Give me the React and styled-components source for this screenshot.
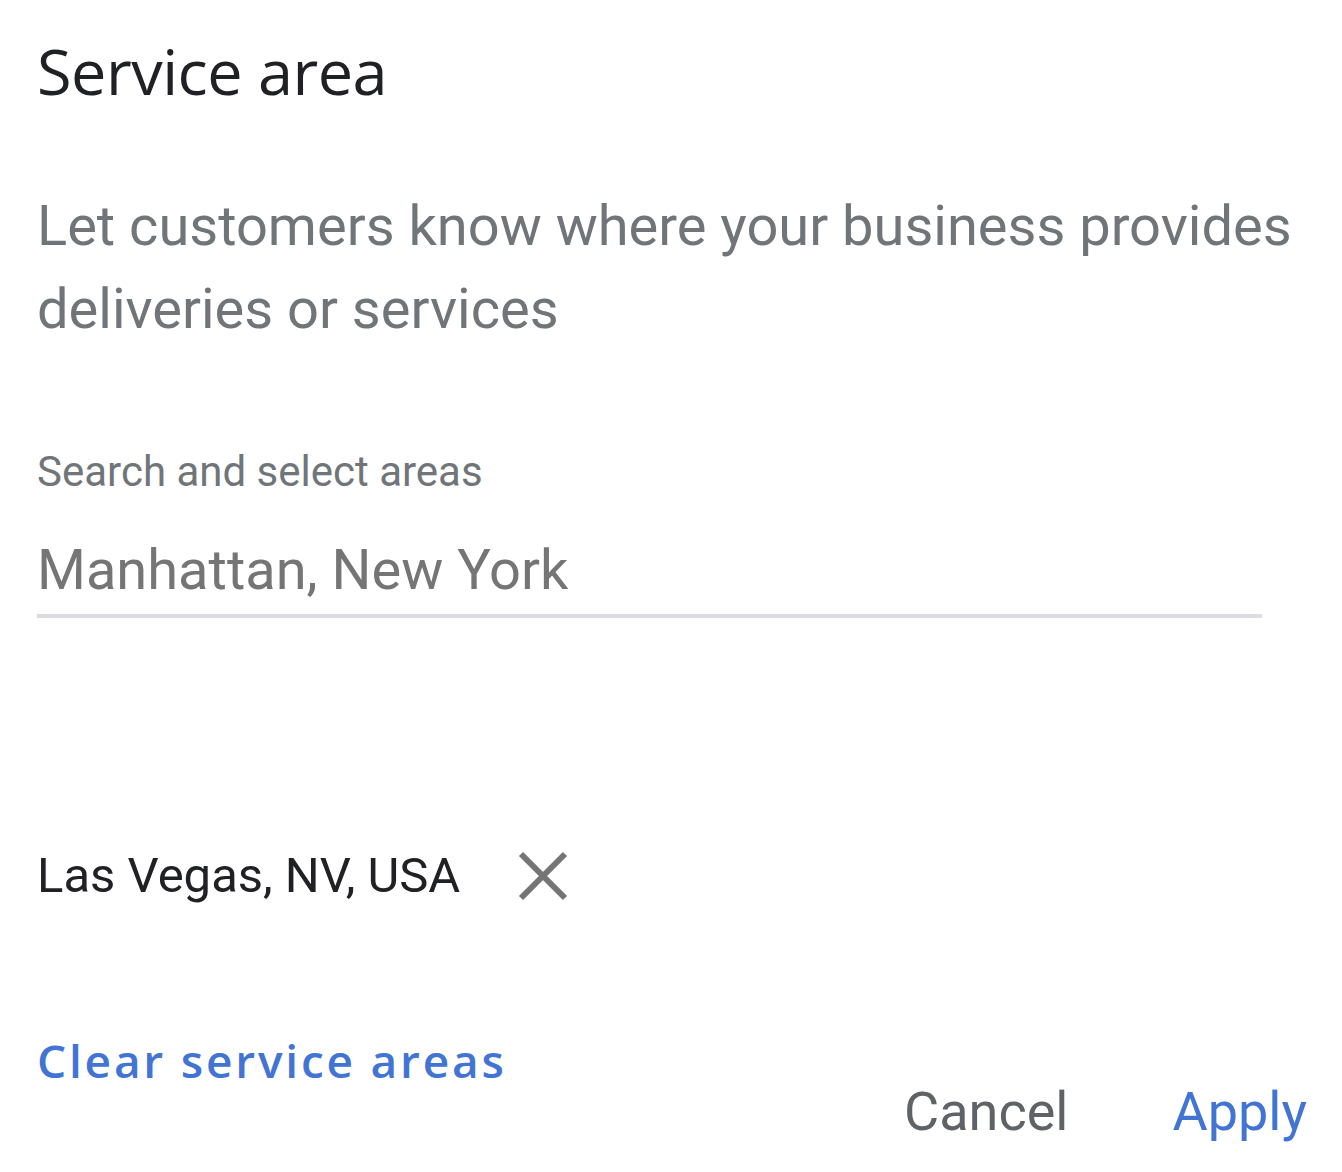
import React from "react";
import styled, { createGlobalStyle } from "styled-components";

const GlobalStyle = createGlobalStyle`
  html, body {
    margin: 0;
    padding: 0;
    background: #ffffff;
  }
`;

const App = () => {
  return (
    <>
      <GlobalStyle />
      <Dialog>
        <Title>Service area</Title>
        <Description>
          Let customers know where your business provides deliveries or services
        </Description>

        <Field>
          <FieldLabel>Search and select areas</FieldLabel>
          <Input placeholder="Manhattan, New York" />
        </Field>

        <Chip>
          <ChipText>Las Vegas, NV, USA</ChipText>
          <RemoveButton aria-label="Remove">
            <svg width="50" height="50" viewBox="0 0 50 50">
              <path
                d="M3 3 L47 47 M47 3 L3 47"
                stroke="#757575"
                strokeWidth="6"
                fill="none"
              />
            </svg>
          </RemoveButton>
        </Chip>

        <Footer>
          <LinkButton>Clear service areas</LinkButton>
          <Actions>
            <TextButton>Cancel</TextButton>
            <TextButton primary>Apply</TextButton>
          </Actions>
        </Footer>
      </Dialog>
    </>
  );
};

export default App;

const Dialog = styled.div`
  width: 1342px;
  height: 1172px;
  box-sizing: border-box;
  padding: 27px 37px 0 37px;
  display: flex;
  flex-direction: column;
  font-family: Roboto, "Liberation Sans", sans-serif;
`;

const Title = styled.h1`
  margin: 0;
  font-family: "Open Sans", Roboto, sans-serif;
  font-weight: 400;
  font-size: 63px;
  line-height: 88px;
  color: #202124;
  letter-spacing: -0.5px;
`;

const Description = styled.p`
  margin: 70px 0 0 0;
  font-size: 56px;
  line-height: 83px;
  color: #70757a;
  max-width: 1270px;
`;

const Field = styled.div`
  margin-top: 95px;
  display: flex;
  flex-direction: column;
  width: 1225px;
`;

const FieldLabel = styled.label`
  font-size: 42px;
  line-height: 52px;
  color: #70757a;
`;

const Input = styled.input`
  margin-top: 36px;
  border: none;
  border-bottom: 4px solid #dadce0;
  outline: none;
  padding: 0 0 8px 0;
  font-family: Roboto, sans-serif;
  font-size: 56px;
  line-height: 72px;
  color: #202124;
  background: transparent;

  &::placeholder {
    color: #757575;
  }
`;

const Chip = styled.div`
  margin-top: 228px;
  display: flex;
  align-items: center;
  gap: 58px;
`;

const ChipText = styled.span`
  font-size: 49px;
  line-height: 60px;
  color: #202124;
`;

const RemoveButton = styled.button`
  border: none;
  background: none;
  padding: 0;
  display: flex;
  cursor: pointer;
`;

const Footer = styled.div`
  margin-top: 126px;
  display: flex;
  flex-direction: column;
`;

const LinkButton = styled.button`
  align-self: flex-start;
  border: none;
  background: none;
  padding: 0;
  font-family: "Open Sans", Roboto, sans-serif;
  font-weight: 600;
  font-size: 46px;
  line-height: 56px;
  letter-spacing: 2.8px;
  color: #4274d4;
  cursor: pointer;
`;

const Actions = styled.div`
  margin-top: -8px;
  margin-right: -2px;
  align-self: flex-end;
  display: flex;
  gap: 104px;
`;

const TextButton = styled.button`
  border: none;
  background: none;
  padding: 0;
  font-family: Roboto, sans-serif;
  font-size: 54px;
  line-height: 64px;
  color: ${(p) => (p.primary ? "#4274d4" : "#5f6368")};
  cursor: pointer;
`;
